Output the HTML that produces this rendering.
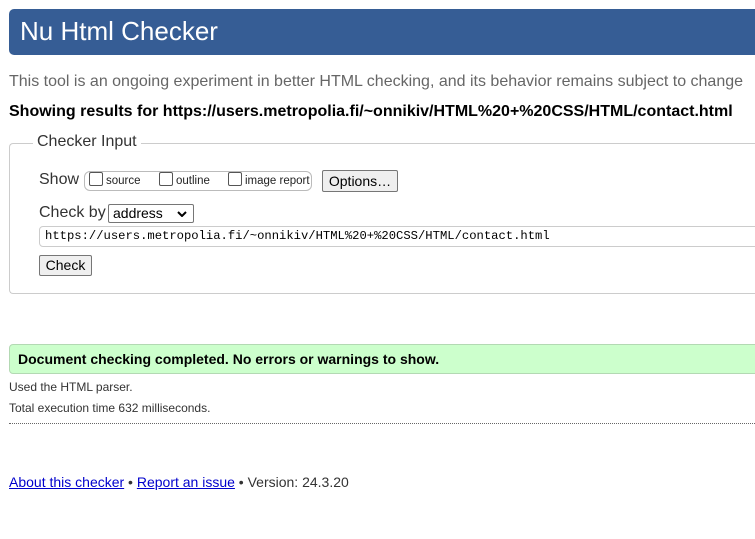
<!DOCTYPE html>
<html><head><meta charset="utf-8"><style>
body{margin:0;width:755px;height:539px;overflow:hidden;background:#fff;font-family:"Liberation Sans",Arial,sans-serif;position:relative;color:#000}
.a{position:absolute;white-space:nowrap}
#hd{left:9px;top:9px;width:780px;height:46px;background:#365d95;border-radius:5px 0 0 5px}
#hd span{position:absolute;left:11px;top:7px;color:#fff;font-size:26px}
#fs{left:9px;top:143px;width:800px;height:149px;border:1px solid #ccc;border-radius:4px;border-right:none}
.cb{display:inline-block;width:12px;height:12px;border:1px solid #555;border-radius:2px;vertical-align:-2px;margin-right:3px;background:#fff}
.btn{position:absolute;background:#efefef;border:1px solid #767676;border-radius:2px;font-size:14px;text-align:center;box-sizing:border-box}
a{color:#00c}
</style></head><body>
<div id="hd" class="a"><span>Nu Html Checker</span></div>
<div class="a" style="left:9px;top:73px;font-size:16px;color:#666">This tool is an ongoing experiment in better HTML checking, and its behavior remains subject to change</div>
<div class="a" style="left:9px;top:103px;font-size:16px;font-weight:bold">Showing results for https://users.metropolia.fi/~onnikiv/HTML%20+%20CSS/HTML/contact.html</div>
<div id="fs" class="a"></div>
<div class="a" style="left:33px;top:133px;font-size:16px;background:#fff;padding:0 4px;color:#333">Checker Input</div>
<div class="a" style="left:39px;top:171px;font-size:16px;color:#333">Show</div>
<div class="a" style="left:84px;top:171px;width:226px;height:18px;border:1px solid #bbb;border-radius:6px;font-size:11.5px;line-height:18px;color:#222">
<span style="position:absolute;left:4px"><span class="cb"></span>source</span>
<span style="position:absolute;left:74px"><span class="cb"></span>outline</span>
<span style="position:absolute;left:143px"><span class="cb"></span>image report</span></div>
<div class="btn" style="left:322px;top:170px;width:76px;height:22px;line-height:20px">Options…</div>
<div class="a" style="left:39px;top:204px;font-size:16px;color:#333">Check by</div>
<div class="a" style="left:108px;top:204px;width:80px;height:17px;border:1px solid #767676;border-radius:2px;font-size:14px;line-height:17px;padding-left:4px;box-sizing:content-box">address<svg style="position:absolute;right:6px;top:6px" width="10" height="6" viewBox="0 0 10 6"><path d="M1 1l4 4 4-4" fill="none" stroke="#000" stroke-width="2"/></svg></div>
<div class="a" style="left:39px;top:226px;width:800px;height:19px;border:1px solid #ccc;border-radius:4px;font-family:'Liberation Mono',monospace;font-size:12.2px;line-height:19px;padding-left:5px">https://users.metropolia.fi/~onnikiv/HTML%20+%20CSS/HTML/contact.html</div>
<div class="btn" style="left:39px;top:255px;width:53px;height:21px;line-height:19px">Check</div>
<div class="a" style="left:9px;top:344px;width:800px;height:28px;background:#ccffcc;border:1px solid #b3d9b3;border-radius:4px;font-size:14px;font-weight:bold;line-height:28px;padding-left:8px">Document checking completed. No errors or warnings to show.</div>
<div class="a" style="left:9px;top:380px;font-size:12px;color:#333">Used the HTML parser.</div>
<div class="a" style="left:9px;top:401px;font-size:12px;color:#333">Total execution time 632 milliseconds.</div>
<div class="a" style="left:9px;top:423px;width:760px;border-top:1px dotted #666"></div>
<div class="a" style="left:9px;top:474px;font-size:14px;color:#333"><a href="#">About this checker</a> • <a href="#">Report an issue</a> • Version: 24.3.20</div>
</body></html>
